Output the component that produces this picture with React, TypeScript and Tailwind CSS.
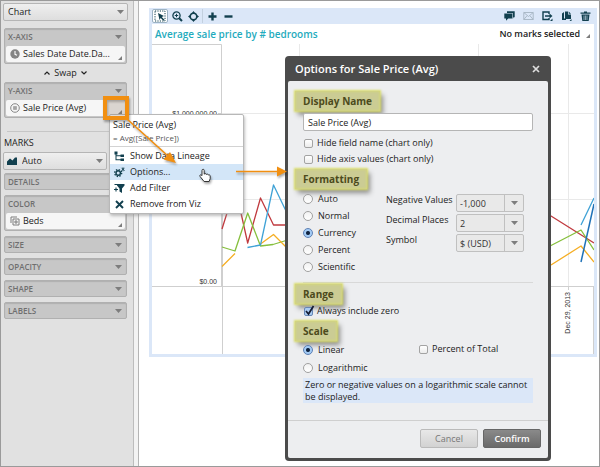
import type { ReactNode } from "react";

const FONT = "font-['Open_Sans','Noto_Sans',sans-serif]";

function Caret({ className = "" }: { className?: string }) {
  return (
    <svg className={`h-1 w-[7px] shrink-0 ${className}`} viewBox="0 0 7 4" aria-hidden="true">
      <path d="M0 0h7L3.5 4z" fill="#7d7d7d" />
    </svg>
  );
}

function Corner() {
  return (
    <svg className="mb-0.5 size-1 shrink-0 self-end" viewBox="0 0 4 4" aria-hidden="true">
      <path d="M4 0v4H0z" fill="#7d7d7d" />
    </svg>
  );
}

function ShelfHeader({ children }: { children: ReactNode }) {
  return (
    <button type="button" className="flex h-[15px] w-full items-center justify-between pr-1 pl-[3px] text-[8px] leading-3 font-semibold text-[#6f6f6f]">
      <span>{children}</span>
      <Caret />
    </button>
  );
}

function Shelf({ title, icon, field }: { title: string; icon?: ReactNode; field?: string }) {
  return (
    <section className="mx-[3px] rounded-xs border border-[#b0b0b0] bg-[#c7c7c7] shadow-[inset_0_1px_1px_#b0b0b0]">
      <ShelfHeader>{title}</ShelfHeader>
      {field && (
        <div className="px-px pt-0.5 pb-px">
          <button type="button" className="flex h-4 w-full items-center rounded-xs bg-[#f6f6f6] pr-[3px] pl-1 text-[9px] leading-3 text-[#222]">
            <span className="flex w-[13px] shrink-0">{icon}</span>
            <span className="flex-1 text-left whitespace-nowrap">{field}</span>
            <Corner />
          </button>
        </div>
      )}
    </section>
  );
}

const ink = "#12404f";

function Toolbar() {
  return (
    <div className="flex h-4 items-center justify-between bg-[#dbe7f8] pr-[3px]">
      <div className="flex items-center">
        <button type="button" aria-label="Select" className="flex h-[14px] w-4 items-center justify-center rounded-xs border border-[#9db3c4] bg-white">
          <svg className="size-3" viewBox="0 0 12 12"><rect x="1" y="1" width="10" height="10" fill="none" stroke={ink} strokeDasharray="1.2 1.2" /><path d="M4 3l6 3-2.2 1 2.7 2.7-1.2 1.1L6.700 8.100 5.500 10z" fill={ink} /></svg>
        </button>
        <button type="button" aria-label="Zoom in" className="ml-[3px] flex size-3 items-center justify-center">
          <svg className="size-[11px]" viewBox="0 0 11 11" fill="none" stroke={ink} strokeWidth="1.3"><circle cx="4.500" cy="4.500" r="3.600" /><path d="M7.200 7.200L10 10" strokeWidth="2" /><path d="M2.800 4.500h3.400M4.500 2.800v3.400" strokeWidth="1" /></svg>
        </button>
        <button type="button" aria-label="Recenter" className="ml-1 flex size-3 items-center justify-center">
          <svg className="size-[11px]" viewBox="0 0 11 11"><circle cx="5.500" cy="5.500" r="3.200" fill="none" stroke={ink} strokeWidth="1.400" /><path d="M5.500 0l1.700 2.300H3.800zM5.500 11l1.700-2.300H3.800zM0 5.500l2.300-1.700v3.400zM11 5.500L8.700 3.800v3.400z" fill={ink} /></svg>
        </button>
        <span className="ml-[3px] h-[14px] w-px bg-[#c3d0df]" />
        <button type="button" aria-label="Increase" className="ml-1 flex size-2.5 items-center justify-center">
          <svg className="size-[9px]" viewBox="0 0 9 9"><path d="M3.300.5h2.400v2.800h2.800v2.400H5.700v2.800H3.300V5.700H.5V3.300h2.800z" fill={ink} /></svg>
        </button>
        <button type="button" aria-label="Decrease" className="ml-1.5 flex size-2.5 items-center justify-center">
          <svg className="size-[9px]" viewBox="0 0 9 9"><path d="M.5 3.300h8v2.400h-8z" fill={ink} /></svg>
        </button>
      </div>
      <div className="flex items-center gap-2">
        <button type="button" aria-label="Comments">
          <svg className="h-2.5 w-[11px]" viewBox="0 0 11 10"><path d="M3 .3h7.700v6H9.500L8.800 8V2H3z" fill={ink} /><path d="M.3 2.600h8v4.800H4.200L2 9.800V7.400H.3z" fill={ink} /></svg>
        </button>
        <button type="button" aria-label="Mail">
          <svg className="h-2.5 w-[11px]" viewBox="0 0 11 10" fill="none" stroke="#a5b4c2" strokeWidth=".9"><path d="M.8 1.500h9.400v7H.8zM.8 1.500l4.700 4 4.700-4M.8 8.500L4 4.800M10.200 8.500L7 4.800" /></svg>
        </button>
        <button type="button" aria-label="Export">
          <svg className="h-2.5 w-[11px]" viewBox="0 0 11 10"><path d="M7 3V1H1v7.500h6V7" fill="none" stroke={ink} strokeWidth="1.400" /><path d="M3 4.300h4.500V2.500L10.500 5l-3 2.500V5.700H3z" fill={ink} /><path d="M10.500 7.500V10H8z" fill={ink} /></svg>
        </button>
        <button type="button" aria-label="Copy">
          <svg className="h-2.5 w-[11px]" viewBox="0 0 11 10"><path d="M1 2.500L3 1v6.500h2V9H1z" fill={ink} /><path d="M4 .5h3v3h3V8H4z" fill={ink} /><path d="M7.700.5L10 2.800H7.700zM10.500 8v2h-2z" fill={ink} /></svg>
        </button>
        <button type="button" aria-label="Delete">
          <svg className="h-2.5 w-[11px]" viewBox="0 0 11 10"><path d="M.5 1.500H4V.5h3v1h3.500v1.300H.5z" fill={ink} /><path d="M1.500 3.500h8L8.700 10H2.300z" fill={ink} /><path d="M4 4.500V9M5.500 4.500V9M7 4.500V9" stroke="#dbe7f8" strokeWidth=".6" /></svg>
        </button>
      </div>
    </div>
  );
}

function Chart() {
  return (
    <svg className="block h-[310px] w-full" viewBox="152 44 442 310" preserveAspectRatio="xMinYMin slice" aria-label="Average sale price by bedrooms">
      <g stroke="#e9e9e9" fill="none">
        <path d="M222 113.500H594M222 199.500H594M299.500 44V286M478.500 44V286M568.500 44V286" />
      </g>
      <g stroke="#cfcfcf" fill="none">
        <path d="M152 44.500H221.500V113M152 286.500H594M222.500 199V354M593.500 286V354M218 113.500h4M568.500 286v4" />
        <path d="M221.500 113V286" />
      </g>
      <g fill="none" strokeWidth="1.300" strokeLinejoin="round">
        <path stroke="#c03a3f" d="M222 229L234.500 189 241 213 247.700 243 260.500 198 273.500 225H290L551 216 594 243" />
        <path stroke="#85bf3c" d="M222 247L235 251 247.700 213 260.500 246 273 244.500 286 240.500 551 245.500 581 230 594 250" />
        <path stroke="#f5ae24" d="M222 266.500L235 253.500M260.500 244L273.500 234.500 286 247M551 265L581 246 594 262" />
        <path stroke="#3fa2d6" d="M247.500 247.500L260.500 245 273.500 185 286 211M581 225L594 198" />
        <path stroke="#1f72b8" d="M581 262L594 204" strokeWidth="1.500" />
      </g>
      <g className="font-['Liberation_Sans',sans-serif] text-[7px]" fill="#333">
        <text x="217" y="116" textAnchor="end">$1,000,000.00</text>
        <text x="217" y="284" textAnchor="end">$0.00</text>
        <text x="0" y="0" textAnchor="end" transform="translate(570 292) rotate(-90)">Dec 29, 2013</text>
      </g>
    </svg>
  );
}

const menuIcons: Record<string, ReactNode> = {
  lineage: <path d="M.5.500h3v3h-3zM6.500 3.500H10v2.400H6.500zM6.500 7.500H10V10H6.500zM1.500 3h1v5.300h4v1h-5zM2 4.200h5v1H2z" fill={ink} />,
  options: (
    <>
      <circle cx="4.200" cy="6" r="2.200" fill="none" stroke={ink} strokeWidth="1.400" />
      <circle cx="4.200" cy="6" r="3.500" fill="none" stroke={ink} strokeWidth="1.300" strokeDasharray="1.400 1.350" />
      <path d="M7.500 .8l3 3M10.500 .8l-3 3M9 .3v4" stroke={ink} strokeWidth=".9" />
    </>
  ),
  filter: (
    <>
      <path d="M3 1h7.500v1.500L8 5.500V10L5.500 8.500v-3L3 2.500z" fill={ink} />
      <path d="M0 6.500h4M2 4.500v4M.5 1.500H3" stroke={ink} strokeWidth="1.100" />
    </>
  ),
  remove: <path d="M2 2l7 7M9 2L2 9" stroke={ink} strokeWidth="1.900" />,
};

function MenuItem({ icon, children, active = false }: { icon: string; children: ReactNode; active?: boolean }) {
  return (
    <li className={active ? "bg-[#d3e6f8]" : ""}>
      <button type="button" className="flex h-4 w-full items-center gap-[5px] pl-1 text-[9px] leading-3 text-[#222]">
        <svg className="size-[11px]" viewBox="0 0 11 11" aria-hidden="true">{menuIcons[icon]}</svg>
        {children}
      </button>
    </li>
  );
}

function Heading({ children }: { children: ReactNode }) {
  return (
    <h3 className="-ml-2 flex">
      <span className="bg-[#cbcc94] px-2 py-1 text-[10px] leading-3 font-bold text-[#4c4a1c] shadow-[inset_0_0_3px_#dadd6a,0_0_2px_1px_#dadd6a,3px_4px_5px_#8c8c8c]">{children}</span>
    </h3>
  );
}

function Check({ children, checked = false }: { children: ReactNode; checked?: boolean }) {
  return (
    <label className="flex h-4 items-center gap-1">
      <span className="relative ml-px flex">
        <input type="checkbox" defaultChecked={checked} className="peer size-[9px] appearance-none rounded-xs border border-[#a3a3a3] bg-linear-to-b from-white to-[#ececec] checked:border-[#6585b5] checked:bg-[#a9cbf2] checked:bg-none" />
        <svg className="pointer-events-none absolute -top-0.5 left-0 hidden size-[11px] peer-checked:block" viewBox="0 0 11 11"><path d="M2 6l2.500 3L9.500 1" fill="none" stroke="#151c33" strokeWidth="1.700" /></svg>
      </span>
      {children}
    </label>
  );
}

function Radio({ name, children, checked = false }: { name: string; children: ReactNode; checked?: boolean }) {
  return (
    <label className="flex h-[17px] items-center gap-[5px]">
      <input type="radio" name={name} defaultChecked={checked} className="size-2.5 appearance-none rounded-full border border-[#a0a0a0] bg-linear-to-b from-[#f2f2f2] to-white checked:border-[#5d80b4] checked:bg-[radial-gradient(circle,#10233f_0_1.5px,#a3cbf5_2.5px_100%)]" />
      {children}
    </label>
  );
}

function Choice({ label, value }: { label: string; value: string }) {
  return (
    <label className="flex h-5 justify-between">
      <span className="leading-3">{label}</span>
      <span className="relative flex h-[18px] w-[68px]">
        <select defaultValue={value} className="size-full appearance-none rounded-xs border border-[#c0c0c0] bg-[#e9e9e9] pt-0.5 pl-[3px] text-[9px] leading-3 text-[#333]">
          <option>{value}</option>
        </select>
        <span className="pointer-events-none absolute inset-y-px right-0 flex w-5 items-center justify-center border-l border-[#c0c0c0]">
          <Caret />
        </span>
      </span>
    </label>
  );
}

function OptionsDialog() {
  return (
    <div role="dialog" aria-labelledby="dialog-title" className="absolute top-[55px] left-[284px] w-[266px] rounded-sm bg-[#4b4b4b] px-[3px] pb-[3px]">
      <header className="flex h-[25px] items-center justify-between pr-2 pl-[7px]">
        <h2 id="dialog-title" className="text-[11px] leading-4 font-semibold text-white">Options for Sale Price (Avg)</h2>
        <button type="button" aria-label="Close" className="flex">
          <svg className="size-2" viewBox="0 0 8 8"><path d="M1 1l6 6M7 1L1 7" stroke="#dedede" strokeWidth="1.700" /></svg>
        </button>
      </header>
      <form className="rounded-xs bg-[#edeef0] text-[9px] leading-3 text-[#222]">
        <div className="flex flex-col px-[15px] pt-2.5 pb-[17px]">
          <Heading>Display Name</Heading>
          <input aria-label="Display Name" defaultValue="Sale Price (Avg)" className="mt-0.5 h-[18px] w-full rounded-xs border border-[#b5b5b5] bg-white px-1 text-[9px]" />
          <div className="mt-1">
            <Check>Hide field name (chart only)</Check>
            <Check>Hide axis values (chart only)</Check>
          </div>
          <div className="mt-0.5"><Heading>Formatting</Heading></div>
          <div className="mt-px flex justify-between pr-[9px]">
            <div>
              <Radio name="format">Auto</Radio>
              <Radio name="format">Normal</Radio>
              <Radio name="format" checked>Currency</Radio>
              <Radio name="format">Percent</Radio>
              <Radio name="format">Scientific</Radio>
            </div>
            <div className="w-[138px] pt-1">
              <Choice label="Negative Values" value="-1,000" />
              <Choice label="Decimal Places" value="2" />
              <Choice label="Symbol" value="$ (USD)" />
            </div>
          </div>
          <div className="mt-[7px] border-t border-[#d8d8d8] pt-px"><Heading>Range</Heading></div>
          <div className="-mt-px"><Check checked>Always include zero</Check></div>
          <div className="mt-0.5"><Heading>Scale</Heading></div>
          <div className="grid grid-cols-2 gap-y-px">
            <Radio name="scale" checked>Linear</Radio>
            <Check>Percent of Total</Check>
            <Radio name="scale">Logarithmic</Radio>
          </div>
          <p className="mt-0.5 bg-[#dbe7f8] px-0.5 pt-px leading-3">Zero or negative values on a logarithmic scale cannot be displayed.</p>
        </div>
        <footer className="flex justify-end gap-[5px] border-t border-[#cfcfcf] px-[7px] pt-2 pb-2.5">
          <button type="button" className="h-[19px] w-[58px] rounded-xs border border-[#bababa] bg-linear-to-b from-[#e8e8e8] to-[#d2d2d2] text-[#777]">Cancel</button>
          <button type="submit" className="h-[19px] w-[58px] rounded-xs border border-[#666] bg-linear-to-b from-[#8a8a8a] to-[#6a6a6a] font-semibold text-white">Confirm</button>
        </footer>
      </form>
    </div>
  );
}

export default function App() {
  return (
    <div className={`relative flex min-h-screen overflow-hidden border border-[#9a9a9a] bg-white text-[#222] ${FONT}`}>
      <aside className="flex w-[133px] shrink-0 flex-col border-r border-[#bdbdbd] bg-[#e1e1e1] pt-[2px] pr-[3px]">
        <div className="relative mx-0.5 flex items-center">
          <select aria-label="View type" defaultValue="Chart" className="h-[18px] w-full appearance-none rounded-xs border border-[#b5b5b5] bg-linear-to-b from-[#efefef] to-[#dedede] pl-1 text-[9px] leading-3">
            <option>Chart</option>
          </select>
          <Caret className="pointer-events-none absolute right-1" />
        </div>
        <div className="mt-[7px]">
          <Shelf title="X-AXIS" field="Sales Date Date.Da..." icon={<svg className="size-[10px]" viewBox="0 0 10 10"><circle cx="5" cy="5" r="4.700" fill="#858585" /><path d="M5 2v3.300l2 1" fill="none" stroke="#fff" strokeWidth="1.100" /></svg>} />
        </div>
        <button type="button" className="flex h-[18px] items-center justify-center gap-1 text-[9px] leading-3">
          <svg className="h-1 w-1.5" viewBox="0 0 6 4"><path d="M.5 3.500L3 1l2.500 2.500" fill="none" stroke="#222" strokeWidth="1.200" /></svg>
          Swap
          <svg className="h-1 w-1.5" viewBox="0 0 6 4"><path d="M.5.500L3 3 5.500.5" fill="none" stroke="#222" strokeWidth="1.200" /></svg>
        </button>
        <Shelf title="Y-AXIS" field="Sale Price (Avg)" icon={<svg className="size-[10px]" viewBox="0 0 10 10" fill="none" stroke="#7d7d7d"><circle cx="5" cy="5" r="4.300" strokeWidth=".9" /><path d="M4.100 3v4M5.900 3v4M3 4.100h4M3 5.900h4" strokeWidth=".7" /></svg>} />
        <hr className="mx-1.5 mt-[13px] border-[#c6c6c6]" />
        <h2 className="mt-1 pl-[3px] text-[9px] leading-[14px] font-medium text-[#222]">MARKS</h2>
        <div className="relative mt-[2px] ml-0.5 flex w-[104px] items-center">
          <select aria-label="Mark type" defaultValue="Auto" className="h-[18px] w-full appearance-none rounded-xs border border-[#b5b5b5] bg-linear-to-b from-[#efefef] to-[#dedede] pl-[18px] text-[9px] leading-3">
            <option>Auto</option>
          </select>
          <svg className="pointer-events-none absolute left-1 h-2 w-[10px]" viewBox="0 0 10 8"><path d="M0 8V4.500l3-3L5.500 3.500 8 .5h2V8z" fill={ink} /></svg>
          <Caret className="pointer-events-none absolute right-1" />
        </div>
        <div className="mt-[3px] flex flex-col gap-[5px]">
          <Shelf title="DETAILS" />
          <Shelf title="COLOR" field="Beds" icon={<svg className="size-[10px]" viewBox="0 0 10 10" fill="none" stroke="#7d7d7d"><path d="M7 1H1v6" /><path d="M3 3h6v6H3zM5 5h2v2H5z" /></svg>} />
          <Shelf title="SIZE" />
          <Shelf title="OPACITY" />
          <Shelf title="SHAPE" />
          <Shelf title="LABELS" />
        </div>
      </aside>
      <div className="w-[5px] shrink-0 border-r border-[#b5b5b5] bg-[#f3f3f3]" />
      <main className="min-w-0 flex-1 pt-[7px] pr-0.5 pl-2.5">
        <div className="border-x-[3px] border-b-[3px] border-[#dbe7f8]">
          <Toolbar />
          <div className="flex h-5 items-center justify-between pr-1 pl-[3px]">
            <h1 className="text-[10px] leading-3 font-semibold text-[#1fabbd]">Average sale price by # bedrooms</h1>
            <button type="button" className="flex items-center gap-1.5 text-[9px] leading-3 font-semibold">No marks selected <Corner /></button>
          </div>
          <Chart />
        </div>
      </main>

      <div className="absolute top-[113px] left-[108px] w-[135px] rounded-xs border border-[#b8b8b8] bg-white pb-px shadow-[1px_2px_3px_#8888]">
        <div className="border-b border-[#d3d3d3] px-[3px] pt-[3px] pb-0.5">
          <p className="text-[9px] leading-[14px]">Sale Price (Avg)</p>
          <p className="text-[8px] leading-3 text-[#555]">= Avg([Sale Price])</p>
        </div>
        <ul className="pt-px">
          <MenuItem icon="lineage">Show Data Lineage</MenuItem>
          <MenuItem icon="options" active>Options...</MenuItem>
          <MenuItem icon="filter">Add Filter</MenuItem>
          <MenuItem icon="remove">Remove from Viz</MenuItem>
        </ul>
      </div>

      <OptionsDialog />

      <svg className="pointer-events-none absolute top-0 left-0 h-[230px] w-[300px] drop-shadow-[1px_2px_1px_#0005]" viewBox="1 1 300 230" aria-hidden="true">
        <rect x="105" y="98" width="22" height="20" fill="#a8937633" stroke="#f18f11" strokeWidth="4" />
        <path d="M127 119L168 156M236 171.500H278" stroke="#f18f11" strokeWidth="1.600" />
        <path d="M176 163L163.500 159.500 170 152zM287 171.500L277 166.500V176.500z" fill="#f18f11" />
        <path d="M202 170.500c0-1.700 2.200-1.700 2.200 0v3.700c.6-1 2.100-.7 2.100.3.600-.8 2-.4 2 .6.600-.6 1.900-.2 1.900.9v2.600l-1.100 2.900h-5l-4-5c-1-1.500.6-2.300 1.900-.8z" fill="#fff" stroke="#222" strokeWidth=".9" />
      </svg>
    </div>
  );
}
